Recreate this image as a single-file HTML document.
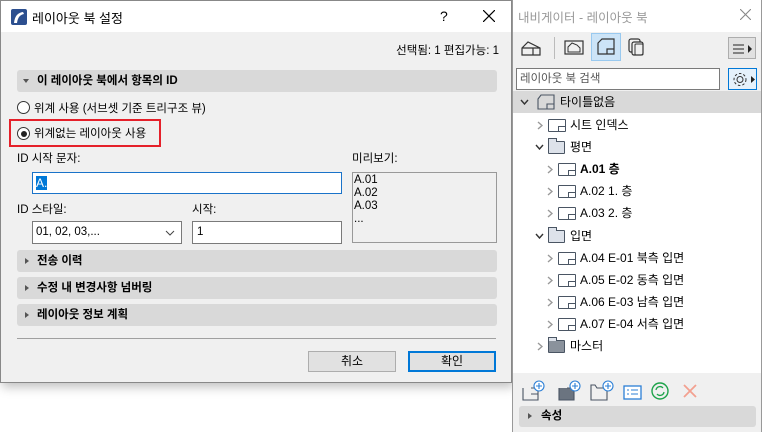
<!DOCTYPE html>
<html><head><meta charset="utf-8"><style>
*{box-sizing:border-box;margin:0;padding:0}
body{width:762px;height:432px;background:#fff;position:relative;overflow:hidden;font-family:"Liberation Sans","Noto Sans CJK KR",sans-serif;font-size:12px;color:#000}
.abs{position:absolute}
.dlg{left:0;top:0;width:512px;height:383px;border:1px solid #888;background:#f0f0f0;box-shadow:2px 4px 10px rgba(0,0,0,.25)}
.title{left:0;top:0;width:510px;height:31px;background:#fff}
.sec{left:16px;width:480px;height:22px;background:#d9d9d9;border-radius:3px;font-weight:bold;font-size:11.5px;line-height:22px;padding-left:20px}
.tri{position:absolute;left:8px;top:8px;width:0;height:0;border-left:4px solid #555;border-top:3.5px solid transparent;border-bottom:3.5px solid transparent}
.tridown{position:absolute;left:6px;top:9px;border-top:4px solid #555;border-left:3.5px solid transparent;border-right:3.5px solid transparent}
.radio{width:13px;height:13px;border:1px solid #333;border-radius:50%;background:#fff}
.inp{background:#fff;border:1px solid #7a7a7a;height:22px}
.btn{height:21px;border:1px solid #adadad;background:#e1e1e1;text-align:center;line-height:19px}
.nav{left:512px;top:0;width:250px;height:432px;border-left:1px solid #999;border-right:1px solid #999;background:#f0f0f0}
.row{position:absolute;left:0;width:248px;height:22px;line-height:22px;font-size:12px}
.cr{position:absolute;top:7px;width:6px;height:9px}
.cd{position:absolute;top:8px;width:9px;height:6px}
.pg{position:absolute;top:5px;width:18px;height:13px;border:1.3px solid #4a5563;border-radius:1px}
.pg:after{content:"";position:absolute;right:-1px;bottom:-1px;width:7px;height:5px;border:1.3px solid #4a5563;border-right:none;border-bottom:none}
.fd{position:absolute;top:5px;width:17px;height:13px;border:1.2px solid #4a5563;background:#dde2ea;border-radius:1px}
.fd:before{content:"";position:absolute;left:-1px;top:-4px;width:7px;height:3px;border:1.2px solid #4a5563;border-bottom:none;background:#dde2ea}
</style></head><body>
<svg width="0" height="0" style="position:absolute"><defs>
<symbol id="cr" viewBox="0 0 6 9"><path d="M1 1L5 4.5L1 8" stroke="#999" stroke-width="1.4" fill="none"/></symbol>
<symbol id="cd" viewBox="0 0 9 6"><path d="M1 1L4.5 5L8 1" stroke="#333" stroke-width="1.4" fill="none"/></symbol>
</defs></svg>
<div class="abs dlg">
 <div class="abs title">
  <svg class="abs" style="left:10px;top:8px" width="16" height="16"><rect width="16" height="16" rx="2" fill="#2c4f8f"/><path d="M3 14 Q4 4 12 3 L13 5 Q7 6 6 14Z" fill="#fff"/></svg>
  <div class="abs" style="left:31px;top:7px;font-size:13px">레이아웃 북 설정</div>
  <div class="abs" style="left:439px;top:7px;font-size:14px">?</div>
  <svg class="abs" style="left:482px;top:9px" width="12" height="12"><path d="M0 0L12 12M12 0L0 12" stroke="#000" stroke-width="1.2"/></svg>
 </div>
 <div class="abs" style="right:12px;top:41px;font-size:11.5px">선택됨: 1 편집가능: 1</div>
 <div class="abs sec" style="top:69px"><span class="tridown"></span>이 레이아웃 북에서 항목의 ID</div>
 <div class="abs radio" style="left:16px;top:100px"></div>
 <div class="abs" style="left:33px;top:99px;font-size:11.5px">위계 사용 (서브셋 기준 트리구조 뷰)</div>
 <div class="abs" style="left:8px;top:118px;width:152px;height:28px;border:2px solid #e5202a"></div>
 <div class="abs radio" style="left:16px;top:126px"><div class="abs" style="left:2.5px;top:2.5px;width:6px;height:6px;border-radius:50%;background:#222"></div></div>
 <div class="abs" style="left:33px;top:124px;font-size:11.5px">위계없는 레이아웃 사용</div>
 <div class="abs" style="left:16px;top:149px;font-size:11.5px">ID 시작 문자:</div>
 <div class="abs" style="left:351px;top:149px;font-size:11.5px">미리보기:</div>
 <div class="abs inp" style="left:31px;top:171px;width:310px;border-color:#1a73c9"><span class="abs" style="left:3px;top:3px;background:#0078d7;color:#fff;font-size:12px;line-height:14px">A.</span></div>
 <div class="abs" style="left:351px;top:171px;width:145px;height:71px;border:1px solid #999;background:#f0f0f0;font-size:11.5px;line-height:13px;padding:1px 1px">A.01<br>A.02<br>A.03<br>...</div>
 <div class="abs" style="left:16px;top:200px;font-size:11.5px">ID 스타일:</div>
 <div class="abs" style="left:191px;top:200px;font-size:11.5px">시작:</div>
 <div class="abs inp" style="left:31px;top:220px;width:150px;height:23px;font-size:11.5px;line-height:21px;padding-left:3px">01, 02, 03,...<svg class="abs" style="right:6px;top:8px" width="10" height="6"><path d="M1 1L5 5L9 1" stroke="#444" fill="none"/></svg></div>
 <div class="abs inp" style="left:191px;top:220px;width:150px;height:23px;font-size:11.5px;line-height:21px;padding-left:4px">1</div>
 <div class="abs sec" style="top:249px"><span class="tri"></span>전송 이력</div>
 <div class="abs sec" style="top:276px"><span class="tri"></span>수정 내 변경사항 넘버링</div>
 <div class="abs sec" style="top:303px"><span class="tri"></span>레이아웃 정보 계획</div>
 <div class="abs" style="left:16px;top:337px;width:479px;height:1px;background:#a0a0a0"></div>
 <div class="abs btn" style="left:307px;top:350px;width:88px">취소</div>
 <div class="abs btn" style="left:407px;top:350px;width:88px;border:2px solid #0078d7;line-height:17px">확인</div>
</div>

<div class="abs nav">
 <div class="abs" style="left:0;top:0;width:248px;height:32px;background:#fff"></div>
 <div class="abs" style="left:5px;top:7px;font-size:12.5px;color:#999">내비게이터 - 레이아웃 북</div>
 <svg class="abs" style="left:227px;top:9px" width="11" height="11"><path d="M0 0L11 11M11 0L0 11" stroke="#888" stroke-width="1.1"/></svg>
 <svg class="abs" style="left:8px;top:40px" width="20" height="16"><path d="M1 15V8L7 2L19 8V15H1ZM1 8L12 8L19 8M12 8V15" stroke="#333" fill="none" stroke-width="1.2"/></svg>
 <div class="abs" style="left:41px;top:37px;width:1px;height:22px;background:#bbb"></div>
 <svg class="abs" style="left:51px;top:38px" width="20" height="18"><rect x="1" y="3" width="18" height="13" stroke="#333" fill="none" stroke-width="1.2"/><path d="M4 14V9L8 5L13 7L16 10V14Z" stroke="#333" fill="none"/></svg>
 <div class="abs" style="left:78px;top:33px;width:30px;height:28px;background:#cce4f7;border:1px solid #99c9ef"></div>
 <svg class="abs" style="left:83px;top:37px" width="20" height="20"><path d="M2 6L6 2H18V17H2Z M2 6V17M11 12H18V17H11Z" stroke="#333" fill="none" stroke-width="1.2"/></svg>
 <svg class="abs" style="left:115px;top:38px" width="18" height="20"><rect x="1" y="1" width="11" height="13" rx="2" stroke="#333" fill="none" stroke-width="1.2"/><rect x="4" y="4" width="11" height="13" rx="2" stroke="#333" fill="#f0f0f0" stroke-width="1.2"/><rect x="7" y="6" width="8" height="11" rx="1" stroke="#333" fill="none"/></svg>
 <div class="abs" style="left:215px;top:37px;width:28px;height:22px;background:#e1e1e1;border:1px solid #adadad"><svg class="abs" style="left:4px;top:6px" width="20" height="10"><path d="M0 1H11M0 5H11M0 9H11" stroke="#222"/><path d="M15 1L19 5L15 9Z" fill="#222"/></svg></div>
 <div class="abs" style="left:3px;top:68px;width:204px;height:22px;background:#fff;border:1px solid #7a7a7a;padding-left:3px;line-height:20px;font-size:11.5px;color:#555">레이아웃 북 검색</div>
 <div class="abs" style="left:215px;top:68px;width:29px;height:22px;background:#e5f1fb;border:1px solid #0078d7"><svg class="abs" style="left:2px;top:2px" width="25" height="17"><circle cx="9" cy="8.5" r="3" stroke="#333" fill="none"/><circle cx="9" cy="8.5" r="6" stroke="#333" fill="none" stroke-dasharray="2.5 2"/><path d="M20 5L24 8.5L20 12Z" fill="#222"/></svg></div>
 <div class="abs" style="left:0;top:93px;width:248px;height:280px;background:#fff"></div>
 <div class="row" style="top:91px;background:#d9d9d9"><svg class="cd" style="left:7px"><use href="#cd"/></svg><svg class="abs" style="left:23px;top:3px" width="20" height="17"><path d="M2 5L5 1H18V15H2Z M2 5V15M11 10H18V15H11Z" stroke="#4a5563" fill="none" stroke-width="1.1"/></svg><span class="abs" style="left:47px">타이틀없음</span></div>
 <div class="row" style="top:114px"><svg class="cr" style="left:24px"><use href="#cr"/></svg><div class="pg" style="left:35px"></div><span class="abs" style="left:57px">시트 인덱스</span></div>
 <div class="row" style="top:136px"><svg class="cd" style="left:22px"><use href="#cd"/></svg><div class="fd" style="left:35px"></div><span class="abs" style="left:57px">평면</span></div>
 <div class="row" style="top:158px"><svg class="cr" style="left:34px"><use href="#cr"/></svg><div class="pg" style="left:45px"></div><span class="abs" style="left:67px;font-weight:bold">A.01 층</span></div>
 <div class="row" style="top:180px"><svg class="cr" style="left:34px"><use href="#cr"/></svg><div class="pg" style="left:45px"></div><span class="abs" style="left:67px">A.02 1. 층</span></div>
 <div class="row" style="top:202px"><svg class="cr" style="left:34px"><use href="#cr"/></svg><div class="pg" style="left:45px"></div><span class="abs" style="left:67px">A.03 2. 층</span></div>
 <div class="row" style="top:225px"><svg class="cd" style="left:22px"><use href="#cd"/></svg><div class="fd" style="left:35px"></div><span class="abs" style="left:57px">입면</span></div>
 <div class="row" style="top:247px"><svg class="cr" style="left:34px"><use href="#cr"/></svg><div class="pg" style="left:45px"></div><span class="abs" style="left:67px">A.04 E-01 북측 입면</span></div>
 <div class="row" style="top:269px"><svg class="cr" style="left:34px"><use href="#cr"/></svg><div class="pg" style="left:45px"></div><span class="abs" style="left:67px">A.05 E-02 동측 입면</span></div>
 <div class="row" style="top:291px"><svg class="cr" style="left:34px"><use href="#cr"/></svg><div class="pg" style="left:45px"></div><span class="abs" style="left:67px">A.06 E-03 남측 입면</span></div>
 <div class="row" style="top:313px"><svg class="cr" style="left:34px"><use href="#cr"/></svg><div class="pg" style="left:45px"></div><span class="abs" style="left:67px">A.07 E-04 서측 입면</span></div>
 <div class="row" style="top:335px"><svg class="cr" style="left:24px"><use href="#cr"/></svg><div class="fd" style="left:35px;background:#8a929c"></div><span class="abs" style="left:57px">마스터</span></div>
 <svg class="abs" style="left:8px;top:380px" width="130" height="22">
  <g stroke="#4a5563" fill="none" stroke-width="1.1"><path d="M2 8V20H17V8H10M10 14H17V20"/><path d="M38 8V20H53V8H46" fill="#6b7480"/><path d="M70 8V20H86V8H76L74 5H70V8"/></g>
  <g stroke="#2b7fd6" fill="#fff" stroke-width="1.1"><circle cx="18" cy="6" r="5"/><circle cx="54" cy="6" r="5"/><circle cx="87" cy="6" r="5"/><path d="M18 3V9M15 6H21M54 3V9M51 6H57M87 3V9M84 6H90"/></g>
  <rect x="103" y="6" width="17" height="13" stroke="#2b7fd6" fill="#fff" stroke-width="1.3"/><path d="M106 10H108M110 10H117M106 14H108M110 14H117" stroke="#2b7fd6"/>
 </svg>
 <svg class="abs" style="left:138px;top:381px" width="60" height="20"><circle cx="9" cy="10" r="8" stroke="#1ea34a" fill="none" stroke-width="1.4"/><path d="M5 9A4 4 0 0 1 12 7M13 11A4 4 0 0 1 6 13" stroke="#1ea34a" fill="none" stroke-width="1.3"/><path d="M33 4L45 16M45 4L33 16" stroke="#f3a090" stroke-width="1.8"/></svg>
 <div class="abs" style="left:6px;top:406px;width:237px;height:21px;background:#d9d9d9;border-radius:3px;font-size:11.5px;font-weight:bold;line-height:21px;padding-left:22px"><span class="tri" style="left:9px;top:7px"></span>속성</div>
</div>
</body></html>
